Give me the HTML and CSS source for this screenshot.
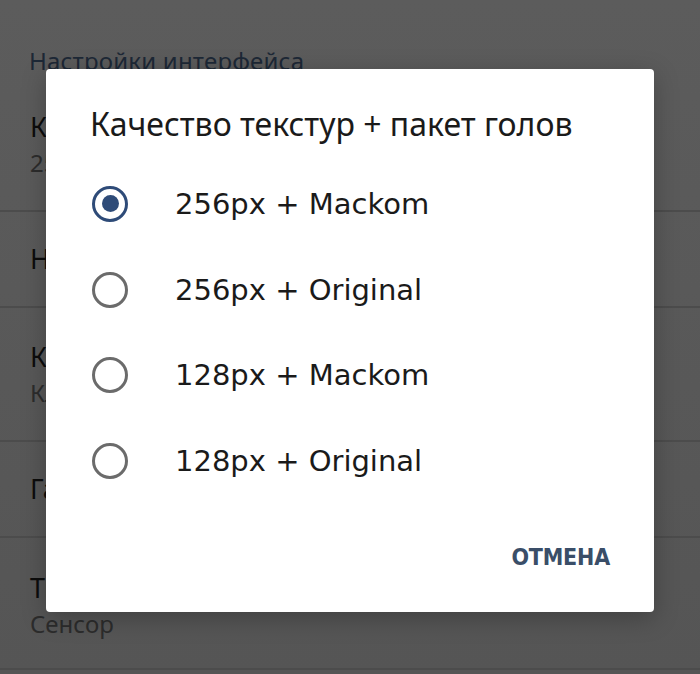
FILE: index.html
```html
<!DOCTYPE html>
<html lang="ru">
<head>
<meta charset="utf-8">
<link rel="stylesheet" href="styles.css">
</head>
<body>
<div class="screen">
  <div class="settings">
    <div class="section-title">Настройки интерфейса</div>
    <div class="item first">
      <div class="item-title">Качество текстур + пакет голов</div>
      <div class="item-sub">256px + Mackom</div>
    </div>
    <div class="item single">
      <div class="item-title">Настройки HUD</div>
    </div>
    <div class="item">
      <div class="item-title">Камера</div>
      <div class="item-sub">Классическая</div>
    </div>
    <div class="item single">
      <div class="item-title">Гамма</div>
    </div>
    <div class="item last">
      <div class="item-title">Тип управления</div>
      <div class="item-sub">Сенсор</div>
    </div>
  </div>

  <div class="dialog">
    <div class="dialog-title">Качество текстур + пакет голов</div>
    <div class="options">
      <div class="option"><span class="radio checked"></span><span class="label">256px + Mackom</span></div>
      <div class="option"><span class="radio"></span><span class="label">256px + Original</span></div>
      <div class="option"><span class="radio"></span><span class="label">128px + Mackom</span></div>
      <div class="option"><span class="radio"></span><span class="label">128px + Original</span></div>
    </div>
    <div class="actions"><span class="btn">ОТМЕНА</span></div>
  </div>
</div>
</body>
</html>
```

FILE: styles.css
```css
* { box-sizing: border-box; }
html, body { margin: 0; padding: 0; }
body {
  width: 700px;
  height: 674px;
  overflow: hidden;
  background: #595959;
  font-family: "Noto Sans", "Open Sans", sans-serif;
}
.screen {
  position: relative;
  width: 700px;
  height: 674px;
  background: linear-gradient(#5c5c5c, #555555);
}
.settings {
  display: flex;
  flex-direction: column;
}
.section-title {
  padding: 44px 0 0 29px;
  height: 96px;
  font-size: 24px;
  color: #1d2836;
  letter-spacing: 0.2px;
}
.item {
  display: flex;
  flex-direction: column;
  justify-content: center;
  padding-left: 30px;
  border-bottom: 2px solid #4c4c4c;
  height: 134px;
}
.item.first { height: 116px; justify-content: flex-start; padding-top: 12px; }
.item.single { height: 96px; }
.item.last { height: 132px; padding-top: 4px; }
.item-title {
  font-size: 27px;
  color: #0c0c0c;
  line-height: 38px;
}
.item-sub {
  font-size: 24px;
  color: #2c2c2c;
  line-height: 34px;
}

.dialog {
  position: absolute;
  left: 46px;
  top: 69px;
  width: 608px;
  height: 543px;
  background: #ffffff;
  border-radius: 4px;
  box-shadow: 0 6px 24px rgba(0,0,0,0.25);
  display: flex;
  flex-direction: column;
}
.dialog-title {
  padding: 33px 0 0 44px;
  font-size: 32px;
  line-height: 44px;
  color: #1a1a1a;
}
.options {
  display: flex;
  flex-direction: column;
  margin-top: 15px;
}
.option {
  display: flex;
  align-items: center;
  height: 85.7px;
  padding-left: 46px;
}
.radio {
  width: 36px;
  height: 36px;
  border-radius: 50%;
  border: 3.5px solid #6b6b6b;
  display: flex;
  align-items: center;
  justify-content: center;
  flex: none;
}
.radio.checked { border-color: #2e4b78; }
.radio.checked::after {
  content: "";
  width: 17px;
  height: 17px;
  border-radius: 50%;
  background: #2e4b78;
}
.label {
  margin-left: 47px;
  font-family: "DejaVu Sans", sans-serif;
  font-size: 29px;
  color: #1a1a1a;
}
.actions {
  display: flex;
  justify-content: flex-end;
  padding: 40px 44px 0 0;
}
.btn {
  font-family: "DejaVu Sans Condensed", "DejaVu Sans", sans-serif;
  font-weight: bold;
  font-size: 23px;
  color: #3a4e68;
  letter-spacing: -0.2px;
}
```
